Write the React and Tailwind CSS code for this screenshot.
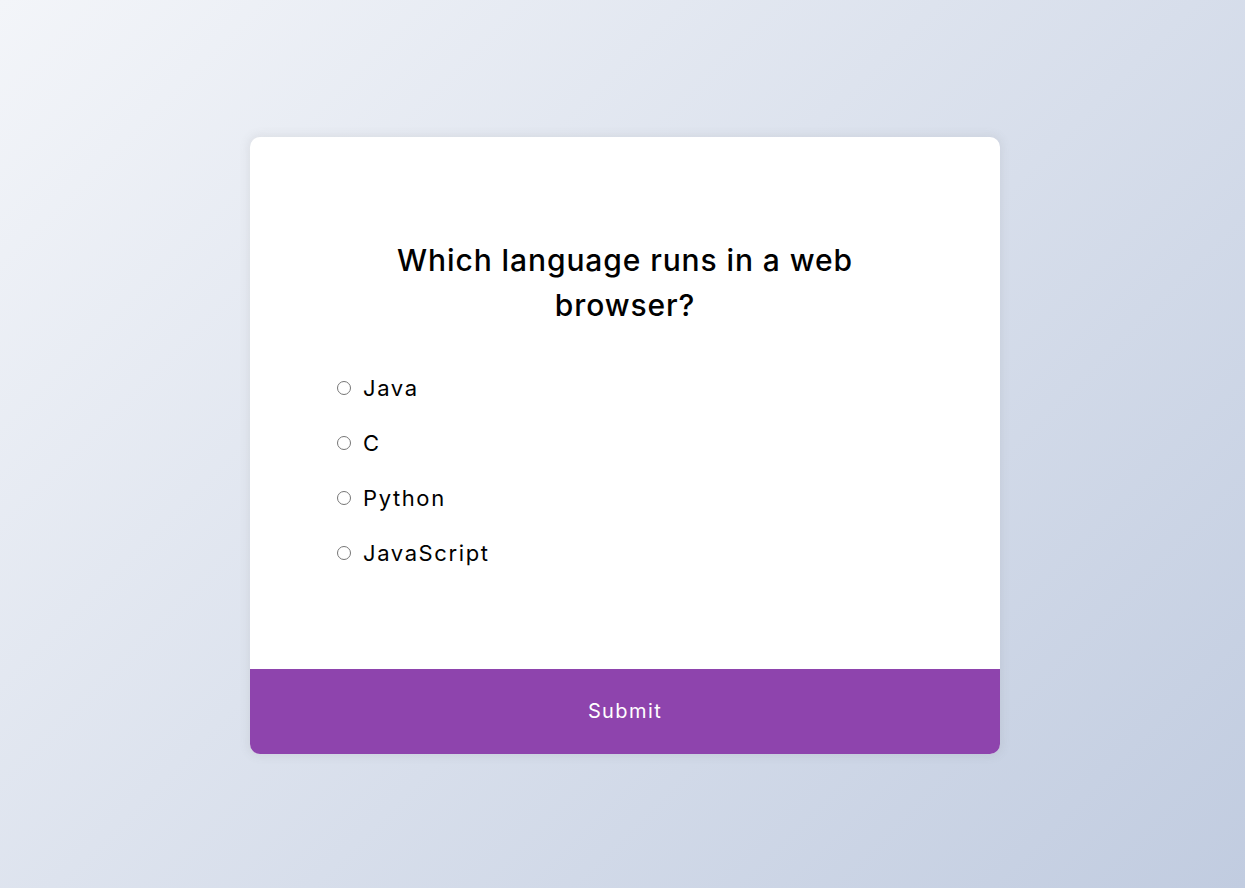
import React from "react";

const options = ["Java", "C", "Python", "JavaScript"];

export default function App() {
  return (
    <div
      className="min-h-screen w-full flex items-center justify-center pl-[5px] pt-[2px] bg-[linear-gradient(135deg,#f3f5f9_0%,#c1cce0_100%)]"
      style={{ fontFamily: "Inter, 'Noto Sans', sans-serif" }}
    >
      <div className="w-[750px] h-[617px] bg-white rounded-[10px] overflow-hidden shadow-[0_0_10px_2px_rgba(100,100,100,0.1)] flex flex-col">
        <div className="flex-1 pt-[101px]">
          <h2 className="mx-auto w-[520px] text-center text-[30px] tracking-[0.9px] leading-[45px] font-medium text-black">
            Which language runs in a web browser?
          </h2>
          <ul className="mt-[44px] pl-[87px] flex flex-col gap-[22px]">
            {options.map((o) => (
              <li key={o} className="flex items-center h-[33px] text-[22px] tracking-[1.6px] text-black">
                <input type="radio" name="answer" className="m-0 w-[14px] h-[14px]" />
                <label className="ml-[12px]">{o}</label>
              </li>
            ))}
          </ul>
        </div>
        <button className="h-[85px] w-full bg-[#8e44ad] text-white text-[20px] tracking-[1.4px] font-normal">
          Submit
        </button>
      </div>
    </div>
  );
}
